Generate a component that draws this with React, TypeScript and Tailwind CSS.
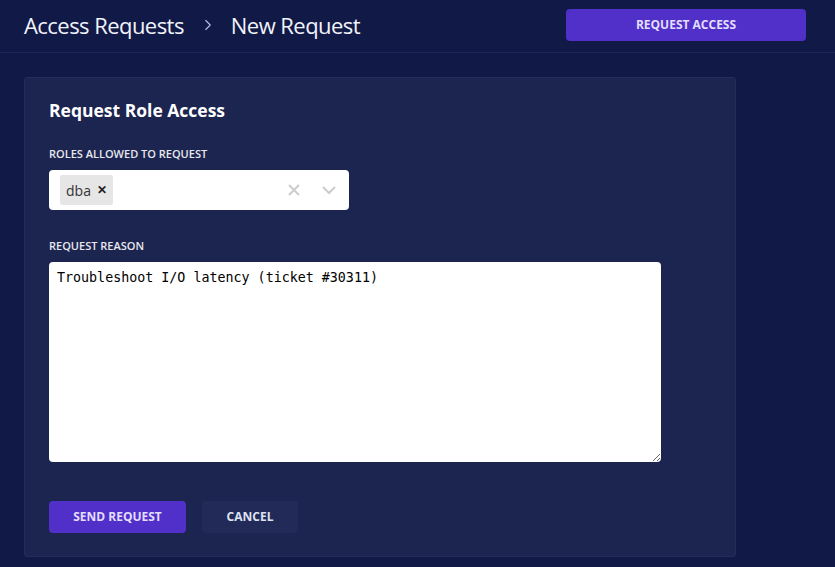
import { ChevronRight } from "lucide-react";

const font = { fontFamily: '"Open Sans", "Noto Sans", sans-serif' };

function Label({ children }: { children: React.ReactNode }) {
  return (
    <div className="mb-2 text-[11px] font-semibold uppercase leading-4 text-white/90">
      {children}
    </div>
  );
}

export default function App() {
  return (
    <div
      className="flex h-[567px] w-full flex-col bg-[#111a46] text-white"
      style={font}
    >
      <header className="flex h-[53px] shrink-0 items-center border-b border-[#1c2553] pb-[2px] pl-6 pr-[29px]">
        <div className="flex items-center text-[22px] font-normal tracking-tight text-[#f2f3fb]">
          <span>Access Requests</span>
          <ChevronRight
            className="ml-[15px] mr-[14px] h-[18px] w-[18px] text-[#b8bedd]"
            strokeWidth={1.5}
          />
          <span>New Request</span>
        </div>
        <button className="ml-auto h-8 w-[240px] rounded-[4px] bg-[#512fc9] text-[12px] font-bold text-[#e2deff]">
          REQUEST ACCESS
        </button>
      </header>

      <main className="flex-1 px-6 pt-6">
        <section className="w-[712px] rounded-[3px] border border-[#242c5a] bg-[#1c2450] px-6 pb-[23px] pt-[20px]">
          <h1 className="mb-[24px] text-[17.5px] font-bold leading-6 text-white">
            Request Role Access
          </h1>

          <Label>Roles allowed to request</Label>
          <div className="flex h-10 w-[300px] items-center rounded-[4px] bg-white pl-[11px] pr-[12px]">
            <div className="flex h-[30px] items-center gap-[6px] rounded-[2px] bg-[#e6e6e6] pl-[6px] pr-[6px] text-[14px] text-[#333]">
              <span>dba</span>
              <span className="text-[12px] font-bold text-[#222]">✕</span>
            </div>
            <div className="ml-auto flex items-center">
              <svg width="14" height="14" viewBox="0 0 14 14" className="text-[#cccccc]">
                <path d="M2 2 L12 12 M12 2 L2 12" stroke="currentColor" strokeWidth="2" />
              </svg>
              <span className="mx-[10px] h-5 w-0" />
              <svg width="16" height="10" viewBox="0 0 16 10" className="text-[#cccccc]">
                <path d="M2 2 L8 8 L14 2" stroke="currentColor" strokeWidth="2" fill="none" />
              </svg>
            </div>
          </div>

          <div className="mt-[28px]">
            <Label>Request reason</Label>
            <textarea
              className="block h-[200px] w-[612px] resize-y rounded-[4px] border-0 bg-white px-2 pb-[5px] pt-[8px] text-[13.33px] leading-[16px] text-black outline-none"
              style={{ fontFamily: '"DejaVu Sans Mono", monospace' }}
              defaultValue="Troubleshoot I/O latency (ticket #30311)"
            />
          </div>

          <div className="mt-[39px] flex gap-4">
            <button className="h-8 w-[137px] rounded-[4px] bg-[#512fc9] text-[12px] font-bold text-[#e2deff]">
              SEND REQUEST
            </button>
            <button className="h-8 w-[96px] rounded-[4px] bg-[#222b58] text-[12px] font-bold text-[#dfe2f2]">
              CANCEL
            </button>
          </div>
        </section>
      </main>
    </div>
  );
}
